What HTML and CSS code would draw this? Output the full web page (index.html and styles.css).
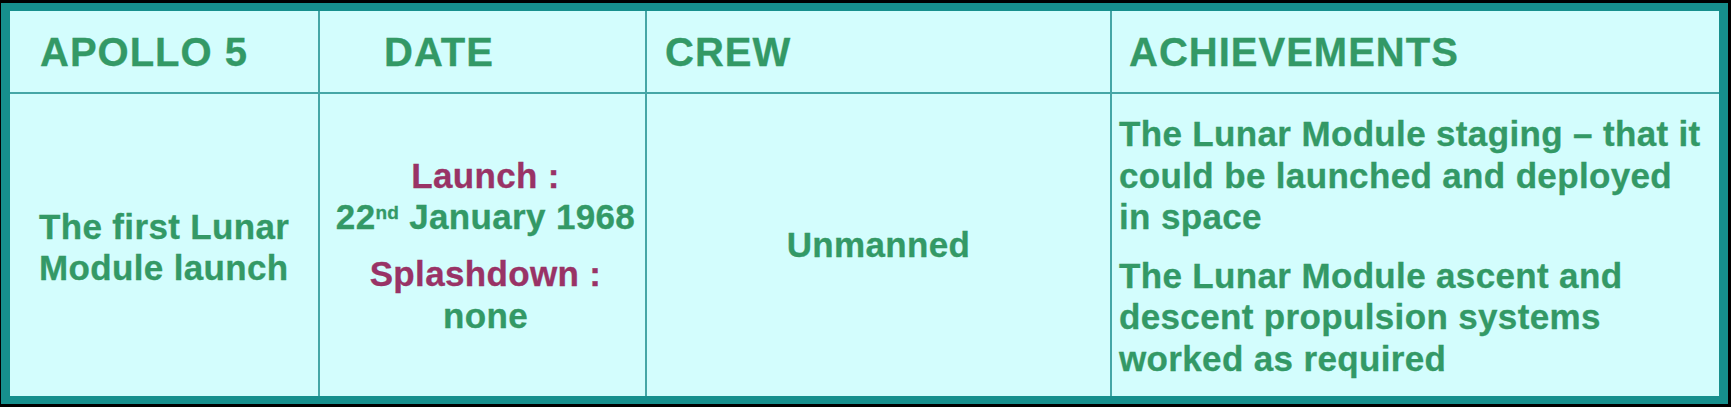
FILE: index.html
```html
<!DOCTYPE html>
<html lang="en">
<head>
<meta charset="utf-8">
<title>Apollo 5</title>
<link rel="stylesheet" href="styles.css">
</head>
<body>
<div class="frame">
  <div class="table">
    <div class="cell head h1">APOLLO 5</div>
    <div class="cell head h2">DATE</div>
    <div class="cell head h3">CREW</div>
    <div class="cell head h4">ACHIEVEMENTS</div>

    <div class="cell body b1">The first Lunar<br>Module launch</div>
    <div class="cell body b2">
      <p class="para"><span class="accent">Launch :</span><br>22<sup class="ord">nd</sup> January 1968</p>
      <p class="para"><span class="accent">Splashdown :</span><br>none</p>
    </div>
    <div class="cell body b3">Unmanned</div>
    <div class="cell body b4">
      <p class="para">The Lunar Module staging – that it<br>could be launched and deployed<br>in space</p>
      <p class="para">The Lunar Module ascent and<br>descent propulsion systems<br>worked as required</p>
    </div>
  </div>
</div>
</body>
</html>
```

FILE: styles.css
```css
html, body {
  margin: 0;
  padding: 0;
  background: #000;
}

body {
  width: 1731px;
  height: 407px;
  overflow: hidden;
  font-family: "Liberation Sans", Arial, Helvetica, sans-serif;
  font-weight: bold;
  color: #339966;
}

.frame {
  padding: 3px 3px 3px 1px;
}

.table {
  display: grid;
  grid-template-columns: 308px 325px 463px 607px;
  grid-template-rows: 81px 302px;
  gap: 2px;
  background: #45a6a6;
  border-style: solid;
  border-color: #168f8d;
  border-width: 8px 9px;
}

.cell {
  background: #d3fdfd;
  display: flex;
  align-items: center;
  white-space: nowrap;
  -webkit-text-stroke: 0.3px currentColor;
}

.head {
  font-size: 40px;
  letter-spacing: 1px;
  padding-top: 2px;
  box-sizing: border-box;
}

.h1 { padding-left: 30px; }
.h2 { padding-left: 64px; }
.h3 { padding-left: 18px; }
.h4 { padding-left: 17px; }

.body {
  font-size: 35px;
  line-height: 41.5px;
  letter-spacing: 0.35px;
}

.b1 {
  padding-left: 29px;
  padding-top: 4px;
  box-sizing: border-box;
}

.b2 {
  flex-direction: column;
  justify-content: center;
  align-items: center;
  text-align: center;
  gap: 15.5px;
  padding-left: 6px;
  padding-top: 1px;
  box-sizing: border-box;
}

.b3 {
  justify-content: center;
}

.b4 {
  flex-direction: column;
  justify-content: center;
  align-items: flex-start;
  gap: 17px;
  padding-left: 7px;
  padding-top: 2px;
  box-sizing: border-box;
}

.para {
  margin: 0;
}

.accent {
  color: #993366;
}

.ord {
  font-size: 19px;
  line-height: 1;
  vertical-align: 10px;
  letter-spacing: 0.2px;
}
```
